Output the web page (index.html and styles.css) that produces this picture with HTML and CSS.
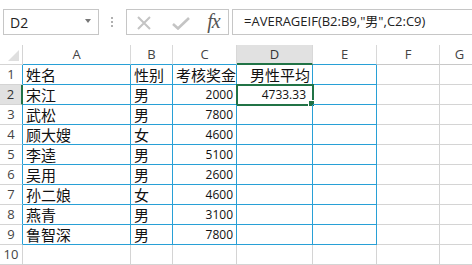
FILE: index.html
```html
<!DOCTYPE html>
<html lang="zh">
<head>
<meta charset="utf-8">
<link rel="stylesheet" href="styles.css">
</head>
<body>
<div class="app">
  <div class="fbar">
    <div class="namebox"><span class="nb-text">D2</span><span class="nb-arrow"></span></div>
    <div class="dots"><i></i><i></i><i></i></div>
    <div class="iconbox">
      <svg class="ic-x" width="14" height="14" viewBox="0 0 14 14"><path d="M1 1 L13 13 M13 1 L1 13" stroke="#c4c4c4" stroke-width="2" fill="none"/></svg>
      <svg class="ic-ok" width="18" height="13" viewBox="0 0 18 13"><path d="M1 7 L6 11.5 L17 1" stroke="#c4c4c4" stroke-width="2.6" fill="none"/></svg>
      <span class="fx">fx</span>
    </div>
    <div class="formula">=AVERAGEIF(B2:B9,"男",C2:C9)</div>
  </div>
  <div class="sheet">
    <div class="corner"><span class="tri"></span></div>
    <div class="ch bl">A</div><div class="ch bl">B</div><div class="ch bl">C</div><div class="ch sel">D</div><div class="ch bl">E</div><div class="ch">F</div><div class="ch">G</div>

    <div class="rh bl">1</div><div class="c t b">姓名</div><div class="c t b">性别</div><div class="c t b">考核奖金</div><div class="c t b ind">男性平均</div><div class="c b"></div><div class="c"></div><div class="c"></div>
    <div class="rh rsel">2</div><div class="c t b">宋江</div><div class="c t b">男</div><div class="c n b">2000</div><div class="c n b active">4733.33<span class="handle"></span></div><div class="c b"></div><div class="c"></div><div class="c"></div>
    <div class="rh bl">3</div><div class="c t b">武松</div><div class="c t b">男</div><div class="c n b">7800</div><div class="c b"></div><div class="c b"></div><div class="c"></div><div class="c"></div>
    <div class="rh bl">4</div><div class="c t b">顾大嫂</div><div class="c t b">女</div><div class="c n b">4600</div><div class="c b"></div><div class="c b"></div><div class="c"></div><div class="c"></div>
    <div class="rh bl">5</div><div class="c t b">李逵</div><div class="c t b">男</div><div class="c n b">5100</div><div class="c b"></div><div class="c b"></div><div class="c"></div><div class="c"></div>
    <div class="rh bl">6</div><div class="c t b">吴用</div><div class="c t b">男</div><div class="c n b">2600</div><div class="c b"></div><div class="c b"></div><div class="c"></div><div class="c"></div>
    <div class="rh bl">7</div><div class="c t b">孙二娘</div><div class="c t b">女</div><div class="c n b">4600</div><div class="c b"></div><div class="c b"></div><div class="c"></div><div class="c"></div>
    <div class="rh bl">8</div><div class="c t b">燕青</div><div class="c t b">男</div><div class="c n b">3100</div><div class="c b"></div><div class="c b"></div><div class="c"></div><div class="c"></div>
    <div class="rh bl">9</div><div class="c t b">鲁智深</div><div class="c t b">男</div><div class="c n b">7800</div><div class="c b"></div><div class="c b"></div><div class="c"></div><div class="c"></div>
    <div class="rh">10</div><div class="c"></div><div class="c"></div><div class="c"></div><div class="c"></div><div class="c"></div><div class="c"></div><div class="c"></div>
  </div>
</div>
</body>
</html>
```

FILE: styles.css
```css
* { box-sizing: border-box; }
html, body { margin: 0; padding: 0; background: #fff; }
body { width: 472px; height: 265px; overflow: hidden; font-family: "Open Sans", "Noto Sans CJK SC", sans-serif; }

.fbar {
  height: 45px;
  display: flex;
  align-items: flex-start;
  padding: 9px 0 0 3px;
}
.namebox {
  width: 102px; height: 26px;
  border: 1px solid #c6c6c6;
  display: flex; align-items: center; justify-content: space-between;
  padding: 0 7px 0 6px;
}
.nb-text { font-size: 14px; color: #222; }
.nb-arrow {
  width: 0; height: 0;
  border-left: 3.5px solid transparent; border-right: 3.5px solid transparent;
  border-top: 4px solid #777;
  margin-top: -3px;
}
.dots {
  width: 30px; height: 26px;
  display: flex; flex-direction: column; align-items: center; justify-content: center; gap: 2px;
}
.dots i { display: block; width: 2px; height: 2px; background: #b0b0b0; }
.iconbox {
  width: 110px; height: 26px;
  border: 1px solid #c6c6c6;
  display: flex; align-items: center;
  padding-left: 10px;
}
.ic-x { margin-top: 1px; }
.ic-ok { margin-left: 21px; margin-top: 2px; }
.fx {
  margin-left: 17px;
  font-family: "Liberation Serif", "DejaVu Serif", serif;
  font-style: italic; font-size: 20px; color: #555;
  letter-spacing: -1px;
  line-height: 1;
  margin-top: -2px;
}
.formula {
  margin-left: 3px;
  width: 240px; height: 26px; flex: none;
  border: 1px solid #c6c6c6; border-right: none;
  padding-left: 11px;
  font-size: 13px; color: #222;
  line-height: 23px;
  white-space: nowrap;
}

.sheet {
  display: grid;
  grid-template-columns: 23px 108px 42px 64px 76px 64px 63px 40px;
  grid-template-rows: 20px repeat(10, 20px);
}
.corner { border-right: 1px solid #d4d4d4; border-bottom: 1px solid #d4d4d4; position: relative; }
.tri {
  position: absolute; right: 3px; bottom: 3px;
  width: 0; height: 0;
  border-left: 11px solid transparent;
  border-bottom: 11px solid #dfdfdf;
}
.ch {
  border-right: 1px solid #d8d8d8; border-bottom: 1px solid #c8c8c8;
  text-align: center; font-size: 13px; color: #444; line-height: 19px;
}
.ch.bl { border-bottom-color: #28a0d6; }
.ch.sel { background: #e1e1e1; border-bottom: 2px solid #217346; color: #333; }
.rh {
  border-right: 1px solid #d4d4d4; border-bottom: 1px solid #d4d4d4;
  font-size: 13px; color: #444; text-align: center; line-height: 19px;
}
.rh.bl { border-right-color: #28a0d6; }
.rh.rsel { background: #e1e1e1; border-right: 2px solid #217346; color: #333; }
.c {
  border-right: 1px solid #d4d4d4; border-bottom: 1px solid #d4d4d4;
  white-space: nowrap; overflow: visible; color: #111;
  position: relative;
}
.c.b { border-right-color: #28a0d6; border-bottom-color: #28a0d6; }
.c.t { font-size: 15px; line-height: 20px; padding-left: 3px; font-family: "Noto Sans CJK SC", sans-serif; }
.c.t.ind { padding-left: 13px; }
.c.n { font-size: 12px; line-height: 20px; text-align: right; padding-right: 3px; }
.c.active { outline: 2px solid #217346; outline-offset: -1px; padding-right: 6px; }
.handle {
  position: absolute; right: -3px; bottom: -3px;
  width: 5px; height: 5px; background: #217346; border: 1px solid #fff; box-sizing: content-box;
}
```
